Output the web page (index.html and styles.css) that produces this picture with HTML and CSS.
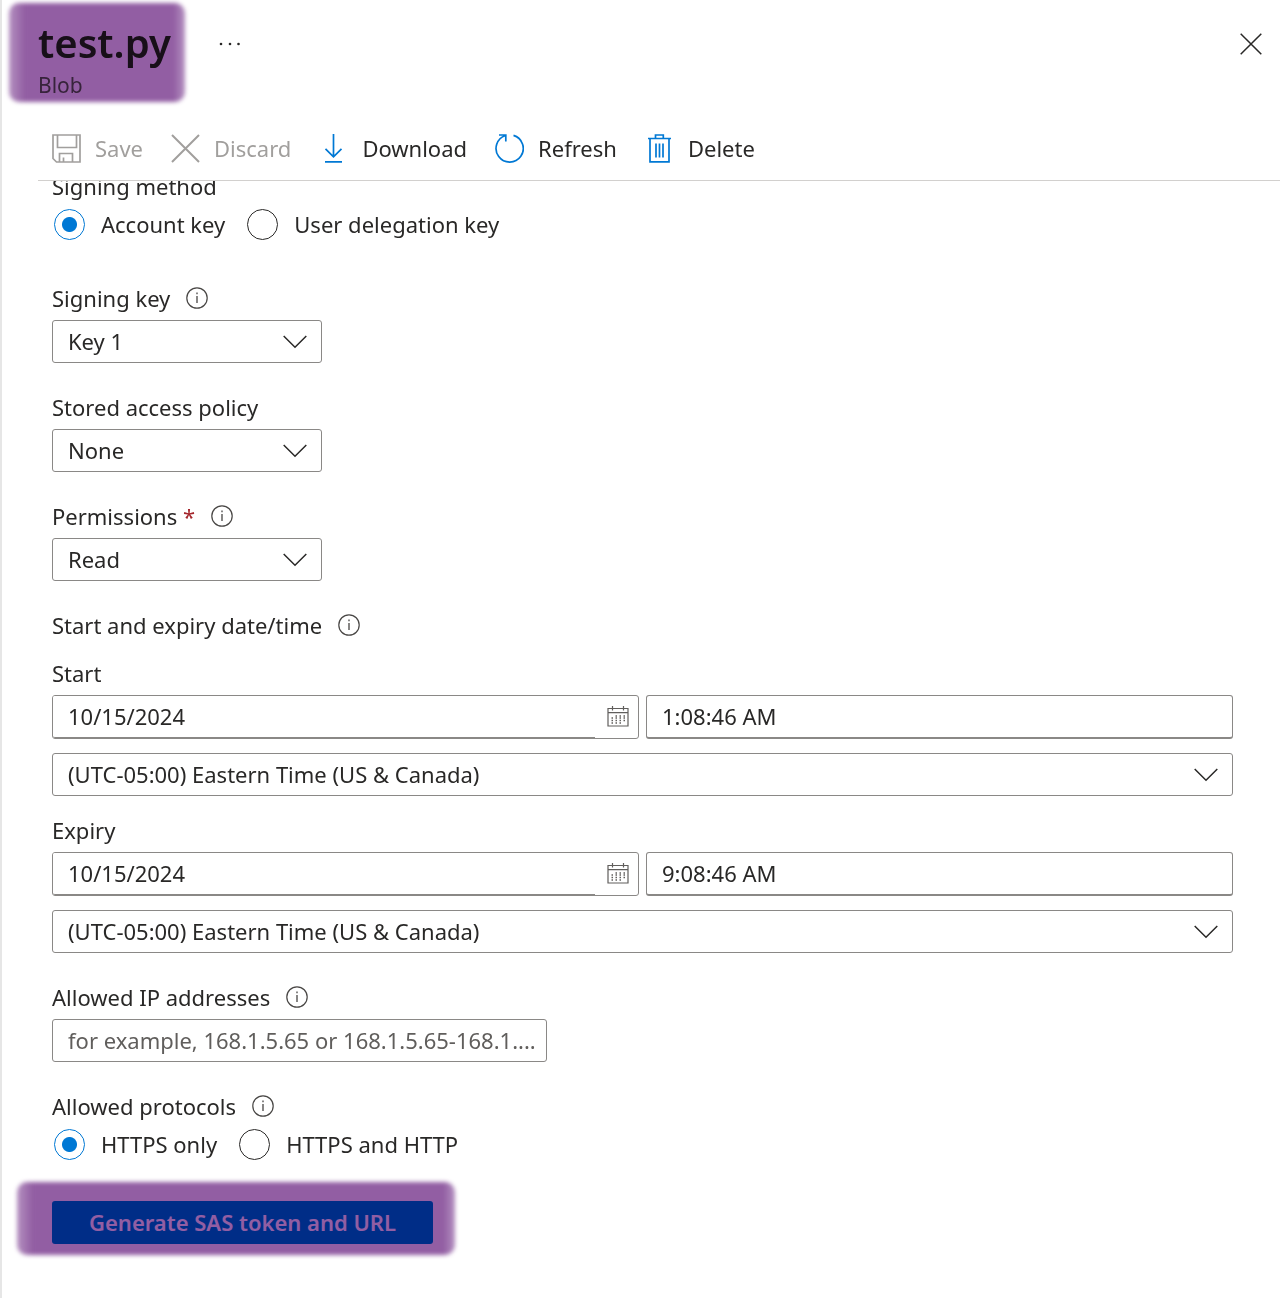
FILE: index.html
```html
<!DOCTYPE html>
<html lang="en">
<head>
<meta charset="utf-8">
<meta name="viewport" content="width=device-width, initial-scale=1">
<title>test.py - Blob</title>
<link rel="stylesheet" href="styles.css">
</head>
<body>
<svg class="sprite" aria-hidden="true">
  <symbol id="info" viewBox="0 0 22 22"><circle cx="11" cy="11" r="10.2" fill="none" stroke="currentColor" stroke-width="1.2"/><path d="M11 9v7M11 5.6v1.6" fill="none" stroke="currentColor" stroke-width="1.3"/></symbol>
  <symbol id="chevron" viewBox="0 0 24 14"><path d="M.7 1 12 12.3 23.3 1" fill="none" stroke="currentColor" stroke-width="1.5"/></symbol>
  <symbol id="calendar" viewBox="0 0 22 22"><path d="M1 2.5h20v17.500H1zM1 6.700h20M5.500 0v4.500M16.500 0v4.500" fill="none" stroke="currentColor" stroke-width="1.2"/><path d="M8.500 10h11M4.500 12h15M4.500 14.500h15M4.500 17h12" fill="none" stroke="currentColor" stroke-width="1.500" stroke-dasharray="1.500 2.500"/></symbol>
</svg>
<main class="blade">
  <header class="header">
    <div class="title-block marked marked-title">
      <h1 class="title">test.py</h1>
      <p class="subtitle">Blob</p>
    </div>
    <button class="icon-button more" type="button" aria-label="More">
      <svg width="22" height="4" viewBox="0 0 22 4"><g fill="#292827"><circle cx="2" cy="2" r="1.300"/><circle cx="11" cy="2" r="1.300"/><circle cx="19.500" cy="2" r="1.300"/></g></svg>
    </button>
    <button class="icon-button close" type="button" aria-label="Close">
      <svg width="22" height="22" viewBox="0 0 22 22"><path d="M.7.7l20.600 20.600M21.300.7.7 21.300" stroke="#292827" stroke-width="1.500"/></svg>
    </button>
  </header>
  <nav class="toolbar" aria-label="Commands">
    <button class="command" type="button" disabled>
      <svg class="command-icon" viewBox="0 0 29 29" fill="none" stroke="#a19f9d" stroke-width="1.700"><path d="M1 1h27v27H4.500L1 24.500zM5.500 1v12.500h19V1M7.500 28v-8.500h13V28M11.500 28v-4.500"/></svg>
      Save
    </button>
    <button class="command" type="button" disabled>
      <svg class="command-icon" viewBox="0 0 29 29" fill="none" stroke="#a19f9d" stroke-width="2"><path d="M1 1l27 27M28 1 1 28"/></svg>
      Discard
    </button>
    <button class="command" type="button">
      <svg class="command-icon" viewBox="0 0 29 29" fill="none" stroke="#0078d4" stroke-width="1.700"><path d="M14.500 0v22.500M6.500 14.800l8 8 8-8M6 27.800h17"/></svg>
      Download
    </button>
    <button class="command" type="button">
      <svg class="command-icon" viewBox="0 0 29 29" fill="none" stroke="#0078d4" stroke-width="1.700"><path d="M18.500 1.400A13.600 13.600 0 1 1 10.500 1.500M4 1h6.800v6.500"/></svg>
      Refresh
    </button>
    <button class="command" type="button">
      <svg class="command-icon" viewBox="0 0 29 29" fill="none" stroke="#0078d4" stroke-width="1.700"><path d="M3 4.500h23M10.500 4.500V1h7.800v3.500M5 4.500v23.300h19V4.500M11 9.500v14M14.500 9.500v14M18 9.500v14"/></svg>
      Delete
    </button>
  </nav>
  <div class="scroll">
    <form class="form">
      <fieldset class="field">
        <legend class="label">Signing method</legend>
        <div class="radios">
          <label class="radio"><input type="radio" name="method" checked>Account key</label>
          <label class="radio"><input type="radio" name="method">User delegation key</label>
        </div>
      </fieldset>
      <div class="fields">
        <div class="field">
          <label class="label" for="key">Signing key <svg class="info"><use href="#info"/></svg></label>
          <div class="select short"><select id="key"><option>Key 1</option></select><svg class="chevron"><use href="#chevron"/></svg></div>
        </div>
        <div class="field">
          <label class="label" for="policy">Stored access policy</label>
          <div class="select short"><select id="policy"><option>None</option></select><svg class="chevron"><use href="#chevron"/></svg></div>
        </div>
        <div class="field">
          <label class="label" for="permissions"><span>Permissions <span class="required">*</span></span> <svg class="info"><use href="#info"/></svg></label>
          <div class="select short"><select id="permissions"><option>Read</option></select><svg class="chevron"><use href="#chevron"/></svg></div>
        </div>
        <section>
          <h2 class="label period-title">Start and expiry date/time <svg class="info"><use href="#info"/></svg></h2>
          <div class="moment">
            <div class="field">
              <label class="label" for="start-date">Start</label>
              <div class="date-time">
                <div class="date"><input class="box" id="start-date" type="text" value="10/15/2024"><button class="icon-button pick" type="button" aria-label="Pick start date"><svg width="22" height="22"><use href="#calendar"/></svg></button></div>
                <input class="box underlined" type="text" value="1:08:46 AM" aria-label="Start time">
              </div>
            </div>
            <div class="select"><select aria-label="Start time zone"><option>(UTC-05:00) Eastern Time (US &amp; Canada)</option></select><svg class="chevron"><use href="#chevron"/></svg></div>
          </div>
          <div class="moment">
            <div class="field">
              <label class="label" for="expiry-date">Expiry</label>
              <div class="date-time">
                <div class="date"><input class="box" id="expiry-date" type="text" value="10/15/2024"><button class="icon-button pick" type="button" aria-label="Pick expiry date"><svg width="22" height="22"><use href="#calendar"/></svg></button></div>
                <input class="box underlined" type="text" value="9:08:46 AM" aria-label="Expiry time">
              </div>
            </div>
            <div class="select"><select aria-label="Expiry time zone"><option>(UTC-05:00) Eastern Time (US &amp; Canada)</option></select><svg class="chevron"><use href="#chevron"/></svg></div>
          </div>
        </section>
        <div class="field">
          <label class="label" for="ip">Allowed IP addresses <svg class="info"><use href="#info"/></svg></label>
          <input class="box ip" id="ip" type="text" placeholder="for example, 168.1.5.65 or 168.1.5.65-168.1....">
        </div>
        <fieldset class="field">
          <legend class="label">Allowed protocols <svg class="info"><use href="#info"/></svg></legend>
          <div class="radios">
            <label class="radio"><input type="radio" name="protocol" checked>HTTPS only</label>
            <label class="radio"><input type="radio" name="protocol">HTTPS and HTTP</label>
          </div>
        </fieldset>
      </div>
      <div class="marked marked-action">
        <button class="generate" type="button">Generate SAS token and URL</button>
      </div>
    </form>
  </div>
</main>
</body>
</html>
```
FILE: styles.css
```css
* { box-sizing: border-box; }

body {
  margin: 0;
  background: #fff;
  color: #292827;
  font: 22px/30px "Noto Sans", "Open Sans", sans-serif;
}

button, input, select { font: inherit; color: inherit; margin: 0; }
h1, h2, p { margin: 0; font-weight: 400; }
fieldset { border: 0; margin: 0; padding: 0; min-width: 0; }
legend { padding: 0; }
.sprite { display: none; }

.blade {
  min-height: 100vh;
  padding-right: 6px;
  border-left: 2px solid #e6e6e6;
}

.header {
  display: flex;
  align-items: flex-start;
  padding: 15px 18px 0 36px;
}

.title {
  font-size: 40px;
  line-height: 56px;
  font-weight: 600;
  color: #292827;
}
.subtitle { font-size: 21px; line-height: 28px; color: #605e5c; }

.icon-button {
  display: flex;
  padding: 0;
  border: 0;
  background: none;
}
.more { margin: 27px 0 0 48px; }
.close { margin: 18px 0 0 auto; }

/* Highlighter strokes drawn over the content */
.marked { position: relative; width: fit-content; }
.marked::after {
  content: "";
  position: absolute;
  border-radius: 10px;
  background: linear-gradient(to right, #925ea3b0, #925ea3 16px, #925ea3 calc(100% - 12px), #925ea3b0);
  filter: blur(2px);
  mix-blend-mode: multiply;
  pointer-events: none;
}
.marked-title::after { inset: -12px -14px -3px -29px; }
.marked-action::after { inset: -19px -22px -11px -35px; }

.toolbar {
  display: flex;
  gap: 28px;
  margin-left: 36px;
  padding: 34px 14px 17px;
  border-bottom: 1px solid #d2d0ce;
}
.command {
  display: flex;
  align-items: center;
  gap: 14px;
  padding: 0;
  border: 0;
  background: none;
}
.command:disabled { color: #a19f9d; }
.command-icon { width: 29px; height: 29px; }

/* The form is scrolled slightly under the toolbar */
.scroll { overflow: hidden; }
.form { margin-top: -10px; padding: 0 47px 54px 50px; }

.field { display: flex; flex-direction: column; }
.label {
  display: flex;
  align-items: center;
  gap: 16px;
  margin-bottom: 7px;
  font-size: 22px;
  line-height: 30px;
}
.period-title { margin-bottom: 18px; }
.info { width: 22px; height: 22px; color: #484644; }
.required { color: #a4262c; }

.fields {
  display: flex;
  flex-direction: column;
  gap: 29px;
  margin-top: 43px;
}

.radios { display: flex; gap: 22px; padding-left: 2px; }
.radio { display: flex; align-items: center; gap: 16px; height: 32px; }
.radio input {
  appearance: none;
  width: 31px;
  height: 31px;
  border: 1px solid #292827;
  border-radius: 50%;
}
.radio input:checked {
  border-color: #0078d4;
  background: radial-gradient(circle, #0078d4 7px, transparent 8px);
}

.select { display: grid; grid-template-columns: 1fr 39px; align-items: center; }
.short { width: 270px; }
.select select {
  grid-area: 1 / 1 / 2 / 3;
  appearance: none;
  height: 43px;
  padding: 0 39px 2px 15px;
  border: 1px solid #8a8886;
  border-radius: 3px;
  background: #fff;
}
.chevron {
  grid-area: 1 / 2;
  width: 24px;
  height: 14px;
  pointer-events: none;
}

.box {
  min-width: 0;
  height: 43px;
  padding: 0 8px 2px 15px;
  border: 1px solid #8a8886;
  border-radius: 3px;
  background: #fff;
}
.ip { width: 495px; }
.ip::placeholder { color: #605e5c; opacity: 1; }

.moment { display: flex; flex-direction: column; gap: 14px; }
.moment + .moment { margin-top: 19px; }
.date-time { display: grid; grid-template-columns: 1fr 1fr; gap: 7px; }
.underlined { height: 44px; border-bottom-width: 2px; }
.date {
  display: flex;
  align-items: center;
  height: 44px;
  border: 1px solid #8a8886;
  border-radius: 3px;
}
.date .box {
  flex: 1;
  height: 42px;
  border-width: 0 0 1px;
  border-radius: 2px 0 0 2px;
}
.pick { margin: 0 9px 0 12px; color: #605e5c; }

.marked-action { margin-top: 41px; }
.generate {
  height: 43px;
  padding: 0 37px 2px;
  border: 0;
  border-radius: 3px;
  background: #0078d4;
  color: #fff;
  font-weight: 600;
}
```
